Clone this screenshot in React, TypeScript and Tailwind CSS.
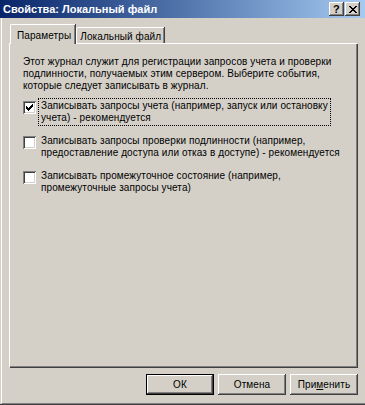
import React, { useState } from 'react';

// Classic Windows 2000 bevels
const raised =
  'bg-[#d4d0c8] shadow-[inset_-1px_-1px_#404040,inset_1px_1px_#ffffff,inset_-2px_-2px_#808080,inset_2px_2px_#d4d0c8]';

interface CheckItemProps {
  checked: boolean;
  focused?: boolean;
  lines: string[];
  onToggle: () => void;
}

const CheckItem: React.FC<CheckItemProps> = ({ checked, focused, lines, onToggle }) => (
  <div className="flex items-start cursor-default" onClick={onToggle}>
    <div className="mt-[3px] w-[13px] h-[13px] shrink-0 bg-white shadow-[inset_1px_1px_#808080,inset_-1px_-1px_#ffffff,inset_2px_2px_#404040,inset_-2px_-2px_#d4d0c8] flex items-center justify-center">
      {checked && (
        <svg width="7" height="7" viewBox="0 0 7 7">
          <path d="M0 2h1v1h1v1h1V3h1V2h1V1h1V0h1v3H6v1H5v1H4v1H3v1H2V6H1V5H0z" fill="#000" />
        </svg>
      )}
    </div>
    <div
      className={`ml-[2px] px-[2px] py-px leading-[12px] border border-dotted ${
        focused ? 'border-black' : 'border-transparent'
      }`}
    >
      {lines.map((l) => (
        <div key={l} className="whitespace-nowrap">
          {l}
        </div>
      ))}
    </div>
  </div>
);

export default function App() {
  const [checks, setChecks] = useState([true, false, false]);
  const toggle = (i: number) => setChecks(checks.map((c, j) => (j === i ? !c : c)));

  return (
    <div className="w-[365px] h-[405px] bg-[#d4d0c8] flex flex-col overflow-hidden text-[10px] tracking-[0.1px] text-black font-['Liberation_Sans',Arial,sans-serif]">
      {/* title bar */}
      <div className="h-[18px] shrink-0 flex items-center pl-[3px] pr-[5px] bg-gradient-to-r from-[#0a246a] to-[#a6caf0]">
        <div className="flex-1 text-white font-bold text-[11px] tracking-normal leading-[18px] whitespace-nowrap">
          Свойства: Локальный файл
        </div>
        <div className={`${raised} w-[15px] h-[14px] flex items-center justify-center font-bold text-[11px] leading-none`}>
          ?
        </div>
        <div className={`${raised} ml-px w-[15px] h-[14px] flex items-center justify-center`}>
          <svg width="8" height="7" viewBox="0 0 8 7">
            <path d="M0 0h2v1h1v1h2V1h1V0h2v1H7v1H6v1H5v1h1v1h1v1h1v1H6V6H5V5H3v1H2v1H0V6h1V5h1V4h1V3H2V2H1V1H0z" fill="#000" />
          </svg>
        </div>
      </div>

      {/* body */}
      <div className="flex-1 flex flex-col border-b border-[#404040]">
        <div className="flex-1 flex flex-col ml-px border-l border-white border-b border-b-[#808080]">
          {/* tabs */}
          <div className="mt-[6px] ml-[8px] flex items-end h-[19px]">
            <div className="relative z-10 -mb-px h-[20px] pl-[6px] pr-[4px] pt-[3px] whitespace-nowrap bg-[#d4d0c8] border-t border-l border-white rounded-tl-[2px] shadow-[inset_-1px_0_#808080,1px_0_#404040]">
              Параметры
            </div>
            <div className="ml-px h-[16px] pl-[3px] pr-[3px] pt-[1px] whitespace-nowrap bg-[#d4d0c8] border-t border-l border-white rounded-tl-[2px] shadow-[inset_-1px_0_#808080,1px_0_#404040]">
              Локальный файл
            </div>
          </div>

          {/* tab panel */}
          <div className="ml-[7px] w-[348px] h-[324px] border-t border-l border-white shadow-[inset_-1px_-1px_#808080,1px_1px_#404040] pl-[13px] pt-[12px]">
            <div className="leading-[12px]">
              <div className="whitespace-nowrap">Этот журнал служит для регистрации запросов учета и проверки</div>
              <div className="whitespace-nowrap">подлинности, получаемых этим сервером. Выберите события,</div>
              <div className="whitespace-nowrap">которые следует записывать в журнал.</div>
            </div>

            <div className="mt-[6px] flex flex-col gap-[7px]">
              <CheckItem
                checked={checks[0]}
                focused
                onToggle={() => toggle(0)}
                lines={['Записывать запросы учета (например, запуск или остановку', 'учета) - рекомендуется']}
              />
              <CheckItem
                checked={checks[1]}
                onToggle={() => toggle(1)}
                lines={[
                  'Записывать запросы проверки подлинности (например,',
                  'предоставление доступа или отказ в доступе) - рекомендуется',
                ]}
              />
              <CheckItem
                checked={checks[2]}
                onToggle={() => toggle(2)}
                lines={['Записывать промежуточное состояние (например,', 'промежуточные запросы учета)']}
              />
            </div>
          </div>

          {/* buttons */}
          <div className="mt-[7px] flex justify-end gap-[4px] pr-[7px]">
            <div className="border border-black">
              <button className={`${raised} w-[66px] h-[19px] leading-[19px]`}>ОК</button>
            </div>
            <button className={`${raised} w-[68px] h-[21px]`}>Отмена</button>
            <button className={`${raised} w-[68px] h-[21px]`}>
              При<span className="underline">м</span>енить
            </button>
          </div>
        </div>
      </div>
    </div>
  );
}
